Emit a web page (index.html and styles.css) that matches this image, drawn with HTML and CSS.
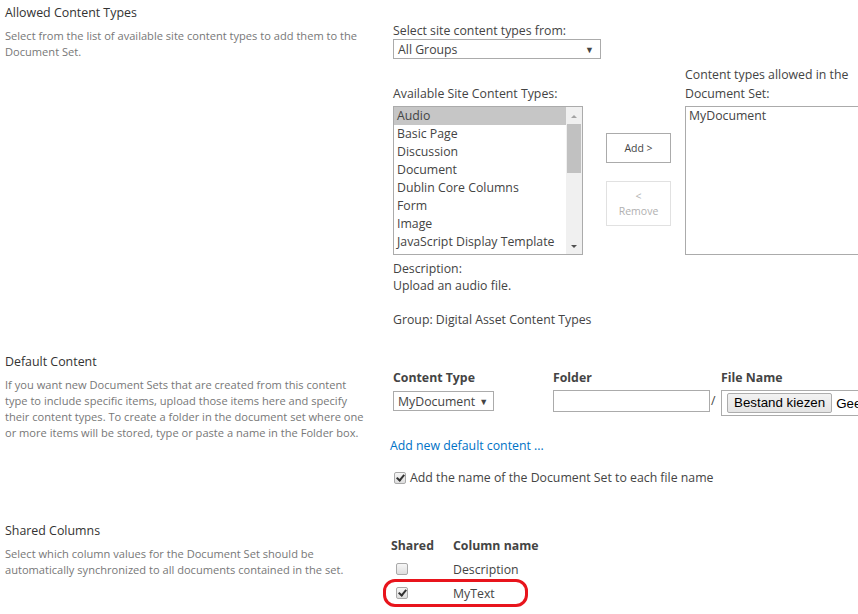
FILE: index.html
```html
<!DOCTYPE html>
<html lang="en">
<head>
    <meta charset="UTF-8">
    <meta name="viewport" content="width=device-width, initial-scale=1.0">
    <title>Document Set Settings</title>
    <link rel="stylesheet" href="styles.css">
</head>
<body>
    <div class="section first">
        <div class="info">
            <h3>Allowed Content Types</h3>
            <p>Select from the list of available site content types to add them to the Document Set.</p>
        </div>
        <div class="fields">
            <div class="label">Select site content types from:</div>
            <div class="select groups"><span>All Groups</span><span class="arrow">&#9660;</span></div>

            <div class="pickers">
                <div class="label bottom">Available Site Content Types:</div>
                <div></div>
                <div class="label bottom">Content types allowed in the<br>Document Set:</div>

                <div class="listbox">
                    <div class="items">
                        <div class="item selected">Audio</div>
                        <div class="item">Basic Page</div>
                        <div class="item">Discussion</div>
                        <div class="item">Document</div>
                        <div class="item">Dublin Core Columns</div>
                        <div class="item">Form</div>
                        <div class="item">Image</div>
                        <div class="item">JavaScript Display Template</div>
                    </div>
                    <div class="scrollbar">
                        <div class="sb-arrow up"></div>
                        <div class="sb-track"><div class="sb-thumb"></div></div>
                        <div class="sb-arrow down"></div>
                    </div>
                </div>
                <div class="buttons">
                    <div class="btn">Add &gt;</div>
                    <div class="btn disabled">&lt;<br>Remove</div>
                </div>
                <div class="listbox allowed">
                    <div class="items">
                        <div class="item">MyDocument</div>
                    </div>
                </div>
            </div>

            <div class="details">
                Description:<br>
                Upload an audio file.<br>
                <br>
                Group: Digital Asset Content Types
            </div>
        </div>
    </div>

    <div class="section second">
        <div class="info">
            <h3>Default Content</h3>
            <p>If you want new Document Sets that are created from this content type to include specific items, upload those items here and specify their content types. To create a folder in the document set where one or more items will be stored, type or paste a name in the Folder box.</p>
        </div>
        <div class="fields">
            <div class="defaults">
                <div class="th">Content Type</div>
                <div class="th">Folder</div>
                <div class="th">File Name</div>

                <div class="select small"><span>MyDocument</span><span class="arrow">&#9660;</span></div>
                <div class="folder"><div class="textbox"></div><span class="slash">/</span></div>
                <div class="filebox"><span class="filebtn">Bestand kiezen</span><span class="nofile">Gee</span></div>
            </div>
            <a class="link" href="#">Add new default content ...</a>
            <div class="check-row">
                <span class="checkbox checked"></span>
                <span>Add the name of the Document Set to each file name</span>
            </div>
        </div>
    </div>

    <div class="section third">
        <div class="info">
            <h3>Shared Columns</h3>
            <p>Select which column values for the Document Set should be automatically synchronized to all documents contained in the set.</p>
        </div>
        <div class="fields">
            <div class="shared">
                <div class="th">Shared</div>
                <div class="th">Column name</div>

                <div class="cell"><span class="checkbox"></span></div>
                <div class="cell">Description</div>

                <div class="cell marked"><span class="checkbox checked"></span><span class="highlight"></span></div>
                <div class="cell">MyText</div>
            </div>
        </div>
    </div>
</body>
</html>
```

FILE: styles.css
```css
body {
    margin: 0;
    font-family: "Open Sans", "Noto Sans", sans-serif;
    font-size: 12.3px;
    color: #444;
    background: #fff;
    overflow: hidden;
    width: 858px;
    height: 614px;
}
.section {
    display: flex;
}
.info {
    width: 388px;
    padding-left: 5px;
    flex-shrink: 0;
}
.info h3 {
    margin: 0;
    font-size: 12.4px;
    font-weight: normal;
    line-height: 18px;
    color: #333;
}
.info p {
    margin: 6px 0 0;
    font-size: 11.1px;
    line-height: 16px;
    color: #777;
    width: 362px;
}
.fields {
    flex: 1;
    min-width: 0;
}
.first {
    padding-top: 4px;
}
.first .fields {
    padding-top: 18px;
}
.second {
    margin-top: 25px;
}
.second .fields {
    padding-top: 16px;
}
.third {
    margin-top: 35px;
}
.third .fields {
    padding-top: 15px;
}
.label {
    line-height: 17px;
}
.label.bottom {
    line-height: 19px;
    align-self: end;
    margin-bottom: 3px;
}

/* selects */
.select {
    box-sizing: border-box;
    height: 20px;
    border: 1px solid #ababab;
    display: flex;
    align-items: center;
    padding-left: 4px;
    background: #fff;
}
.select .arrow {
    font-size: 9px;
    color: #444;
}
.groups {
    width: 208px;
    justify-content: space-between;
    padding-right: 6px;
}
.small {
    width: 101px;
    margin-top: 1px;
}
.small .arrow {
    margin-left: 4px;
}

/* list pickers */
.pickers {
    margin-top: 6px;
    display: grid;
    grid-template-columns: 190px 102px 190px;
}
.listbox {
    box-sizing: border-box;
    height: 149px;
    border: 1px solid #ababab;
    display: flex;
    background: #fff;
}
.items {
    flex: 1;
}
.item {
    height: 18px;
    line-height: 18px;
    padding-left: 3px;
    white-space: nowrap;
}
.item.selected {
    background: #c6c6c6;
}
.scrollbar {
    width: 16px;
    display: flex;
    flex-direction: column;
    background: #f0f0f0;
}
.sb-arrow {
    height: 17px;
    position: relative;
}
.sb-arrow::after {
    content: "";
    position: absolute;
    left: 5px;
    border-left: 3px solid transparent;
    border-right: 3px solid transparent;
}
.sb-arrow.up::after {
    top: 8px;
    border-bottom: 3px solid #a3a3a3;
}
.sb-arrow.down::after {
    top: 8px;
    border-top: 3px solid #505050;
}
.sb-track {
    flex: 1;
    padding: 0 1px;
}
.sb-thumb {
    height: 49px;
    background: #c1c1c1;
}
.buttons {
    padding: 27px 0 0 23px;
}
.btn {
    box-sizing: border-box;
    width: 65px;
    height: 30px;
    border: 1px solid #ababab;
    font-size: 10.5px;
    line-height: 14px;
    text-align: center;
    display: flex;
    align-items: center;
    justify-content: center;
    color: #444;
    background: #fff;
}
.btn.disabled {
    margin-top: 18px;
    height: 45px;
    border-color: #e1e1e1;
    color: #b1b1b1;
    line-height: 15px;
}
.details {
    margin-top: 5px;
    line-height: 17px;
}

/* default content */
.defaults {
    display: grid;
    grid-template-columns: 160px 168px 1fr;
    row-gap: 3px;
    align-items: start;
}
.th {
    font-weight: bold;
    line-height: 18px;
    color: #444;
}
.folder {
    display: flex;
    align-items: center;
}
.textbox {
    box-sizing: border-box;
    width: 157px;
    height: 22px;
    border: 1px solid #ababab;
    background: #fff;
}
.slash {
    margin-left: 1px;
    line-height: 22px;
}
.filebox {
    box-sizing: border-box;
    height: 26px;
    border: 1px solid #ababab;
    border-right: none;
    display: flex;
    align-items: center;
    padding-left: 5px;
    white-space: nowrap;
    overflow: hidden;
}
.filebtn {
    box-sizing: border-box;
    height: 20px;
    padding: 0 6px;
    border: 1px solid #adadad;
    border-radius: 2px;
    background: linear-gradient(#f2f2f2, #e4e4e4);
    font-family: "Liberation Sans", Arial, sans-serif;
    font-size: 13.33px;
    line-height: 18px;
    color: #000;
}
.nofile {
    margin-left: 4px;
    font-family: "Liberation Sans", Arial, sans-serif;
    font-size: 13.33px;
    color: #000;
}
.link {
    display: block;
    margin: 21px 0 0 -3px;
    line-height: 18px;
    color: #0072c6;
    text-decoration: none;
    width: max-content;
}
.check-row {
    margin-top: 14px;
    display: flex;
    align-items: center;
    line-height: 18px;
    padding-left: 1px;
}
.check-row .checkbox {
    margin-right: 4px;
}

/* checkboxes */
.checkbox {
    box-sizing: border-box;
    display: inline-block;
    width: 12px;
    height: 12px;
    border: 1px solid #a9a9a9;
    border-radius: 2px;
    background: linear-gradient(#f6f6f6, #dedede);
    position: relative;
    flex-shrink: 0;
}
.checkbox.checked::after {
    content: "";
    position: absolute;
    left: 3px;
    top: 0px;
    width: 3px;
    height: 6px;
    border: solid #333;
    border-width: 0 2px 2px 0;
    transform: rotate(40deg);
}

/* shared columns */
.shared {
    display: grid;
    grid-template-columns: 62px 1fr;
    grid-template-rows: 20px 24px 24px;
    margin-left: -2px;
}
.shared .cell {
    display: flex;
    align-items: center;
    position: relative;
}
.shared .cell .checkbox {
    margin-left: 5px;
}
.highlight {
    position: absolute;
    left: -8px;
    top: -2px;
    width: 145px;
    height: 28px;
    box-sizing: border-box;
    border: 3px solid #e8141c;
    border-radius: 12px;
}
```
